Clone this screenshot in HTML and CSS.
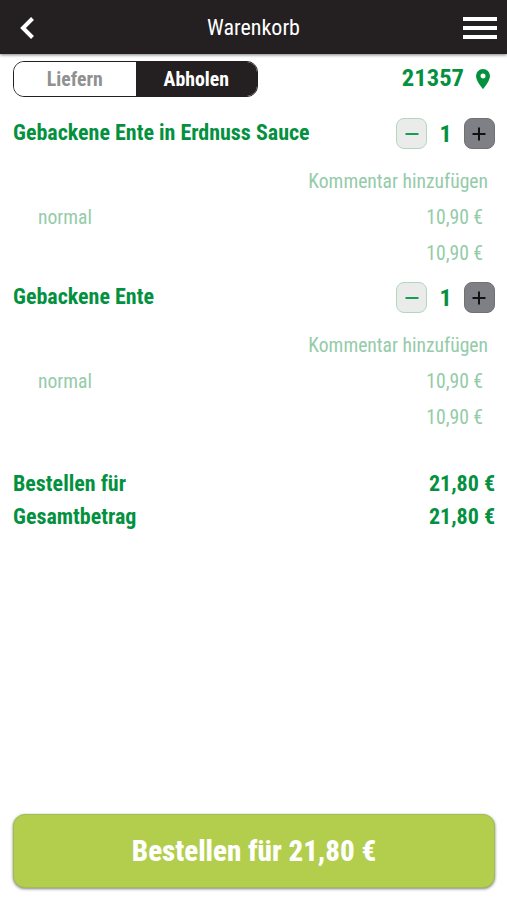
FILE: index.html
```html
<!DOCTYPE html>
<html lang="de">
<head>
  <meta charset="UTF-8">
  <meta name="viewport" content="width=device-width, initial-scale=1">
  <title>Warenkorb</title>
  <link rel="stylesheet" href="styles.css">
</head>
<body>
  <header>
    <svg class="back" viewBox="0 0 14 22"><path d="M12.5 1.5 3 11l9.5 9.5"/></svg>
    <h1>Warenkorb</h1>
    <div class="menu"><span></span><span></span><span></span></div>
  </header>

  <main>
    <div class="top">
      <div class="toggle">
        <button>Liefern</button>
        <button class="active">Abholen</button>
      </div>
      <div class="plz">
        <span>21357</span>
        <svg viewBox="0 0 14 20"><path fill-rule="evenodd" d="M7 0a7 7 0 0 0-7 7c0 5.200 7 13 7 13s7-7.800 7-13a7 7 0 0 0-7-7zm0 4.500a2.500 2.500 0 1 1 0 5 2.500 2.500 0 0 1 0-5z"/></svg>
      </div>
    </div>

    <!-- Artikel -->
    <div class="item">
      <div class="item-head">
        <h2>Gebackene Ente in Erdnuss Sauce</h2>
        <div class="stepper">
          <button class="minus"><svg viewBox="0 0 14 14"><path d="M.5 7h13"/></svg></button>
          <span class="count">1</span>
          <button class="plus"><svg viewBox="0 0 14 14"><path d="M.5 7h13M7 .5v13"/></svg></button>
        </div>
      </div>
      <div class="line comment"><span>Kommentar hinzufügen</span></div>
      <div class="line"><span>normal</span><span>10,90 €</span></div>
      <div class="line sum"><span>10,90 €</span></div>
    </div>

    <div class="item">
      <div class="item-head">
        <h2>Gebackene Ente</h2>
        <div class="stepper">
          <button class="minus"><svg viewBox="0 0 14 14"><path d="M.5 7h13"/></svg></button>
          <span class="count">1</span>
          <button class="plus"><svg viewBox="0 0 14 14"><path d="M.5 7h13M7 .5v13"/></svg></button>
        </div>
      </div>
      <div class="line comment"><span>Kommentar hinzufügen</span></div>
      <div class="line"><span>normal</span><span>10,90 €</span></div>
      <div class="line sum"><span>10,90 €</span></div>
    </div>

    <!-- Summe -->
    <div class="totals">
      <div><span>Bestellen für</span><span>21,80 €</span></div>
      <div><span>Gesamtbetrag</span><span>21,80 €</span></div>
    </div>

    <button class="order">Bestellen für 21,80 €</button>
  </main>
</body>
</html>
```

FILE: styles.css
```css
* {
  box-sizing: border-box;
}

body {
  margin: 0;
  height: 900px;
  display: flex;
  flex-direction: column;
  font-family: "Roboto Condensed", Roboto, sans-serif;
  font-stretch: 75%;
  background-color: #fff;
  color: #04913f;
}

button {
  font: inherit;
  border: none;
  padding: 0;
  cursor: pointer;
}

svg {
  display: block;
}

header {
  height: 54px;
  display: grid;
  grid-template-columns: 34px 1fr 34px;
  align-items: center;
  padding: 2px 10px 0 20px;
  background-color: #242021;
  color: #fff;
  box-shadow: 0 1px 3px rgba(0,0,0,0.5);
}

.back {
  width: 14px;
  height: 22px;
  fill: none;
  stroke: #fff;
  stroke-width: 4;
}

h1 {
  margin: 0;
  padding-right: 10px;
  text-align: center;
  font-size: 22px;
  font-weight: 400;
  line-height: 24px;
}

.menu {
  display: flex;
  flex-direction: column;
  gap: 5px;
}

.menu span {
  height: 4px;
  background-color: #fff;
}

main {
  flex: 1;
  display: flex;
  flex-direction: column;
  padding: 7px 12px 12px 13px;
}

.top {
  display: flex;
  justify-content: space-between;
  height: 36px;
}

.toggle {
  display: flex;
  width: 245px;
  border: 1px solid #242021;
  border-radius: 11px;
  overflow: hidden;
  font-size: 19.8px;
  font-weight: 700;
}

.toggle button {
  flex: 1;
  background-color: #fff;
  color: #919191;
}

.toggle .active {
  background-color: #242021;
  color: #fff;
}

.plz {
  display: flex;
  align-items: center;
  gap: 12px;
  padding-right: 5px;
  font-size: 24.6px;
  font-weight: 700;
  line-height: 30px;
}

.plz span {
  margin-top: -2px;
}

.plz svg {
  width: 14px;
  height: 20px;
  fill: #04913f;
}

.item {
  height: 164px;
}

.top + .item {
  margin-top: 17px;
}

.item-head {
  display: flex;
  justify-content: space-between;
  height: 50px;
  padding-top: 4px;
}

h2 {
  margin: 0;
  font-size: 22px;
  font-weight: 700;
  line-height: 30px;
}

.stepper {
  display: flex;
  width: 99px;
  height: 31px;
  justify-content: space-between;
  align-items: center;
}

.stepper button {
  display: grid;
  place-items: center;
  width: 31px;
  height: 31px;
  border-radius: 8px;
}

.stepper svg {
  width: 14px;
  height: 14px;
  fill: none;
  stroke-width: 2;
}

.minus {
  background-color: #ebebeb;
  border: 1px solid #b0d8bf;
  stroke: #189b55;
}

.plus {
  background-color: #7f8086;
  border: 1px solid #707075;
  stroke: #111;
}

.count {
  font-size: 24px;
  font-weight: 700;
}

.line {
  display: flex;
  justify-content: space-between;
  height: 36px;
  line-height: 36px;
  padding: 0 12px 0 25px;
  font-size: 19.6px;
  color: #94cba9;
}

.comment {
  justify-content: flex-end;
  padding-right: 7px;
}

.sum {
  justify-content: flex-end;
}

.totals {
  margin-top: 25px;
  font-size: 22px;
  font-weight: 700;
  line-height: 33px;
}

.totals div {
  display: flex;
  justify-content: space-between;
}

.order {
  height: 74px;
  margin-top: auto;
  border: 1px solid #9fbd52;
  border-radius: 12px;
  background-color: #b2ce4c;
  box-shadow: 0 1px 3px rgba(0,0,0,0.5);
  color: #fff;
  font-size: 29px;
  font-weight: 800;
}
```
